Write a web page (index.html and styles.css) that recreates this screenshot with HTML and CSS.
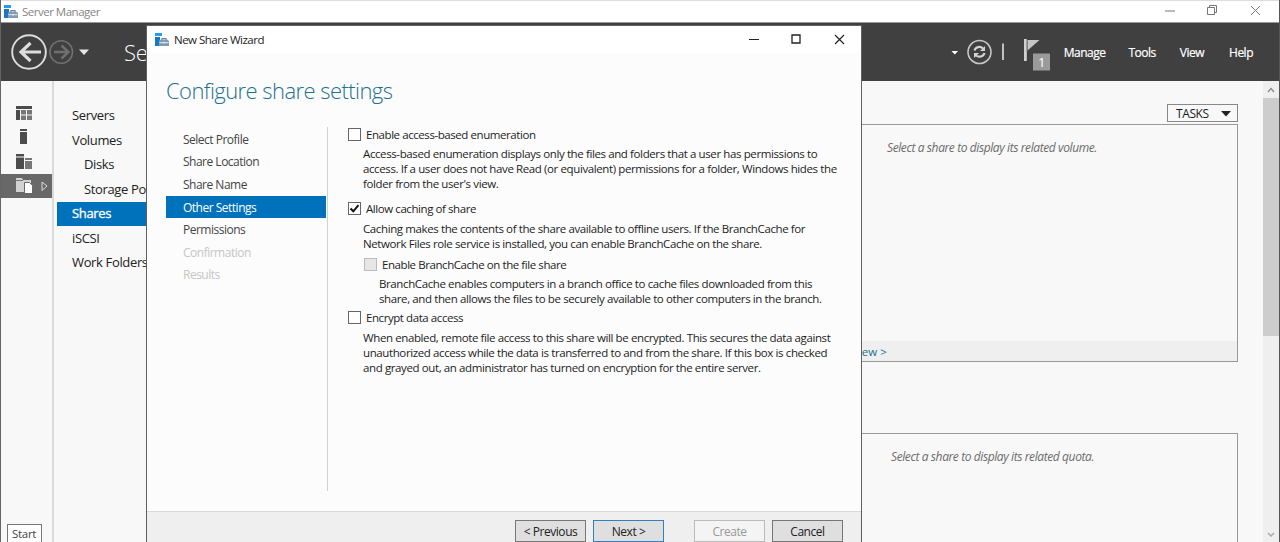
FILE: index.html
```html
<!DOCTYPE html>
<html lang="en">
<head>
<meta charset="utf-8">
<title>Server Manager</title>
<link rel="stylesheet" href="styles.css">
</head>
<body>
<svg width="0" height="0" class="defs">
  <symbol id="app" viewBox="0 0 14 14">
    <path d="M0 0h7v3H0z" fill="#2b9be8"/><path d="M0 4h5v9H0z" fill="#1878c8"/>
    <path d="M7 7V5.500h4V7" fill="none" stroke="#6c8496" stroke-width="1.200"/>
    <path d="M4 7.500l2-1h6l2 1.500v5H4z" fill="#7f9bb0"/><path d="M4.500 9.700h9M9 8.700v2" stroke="#e4edf3" stroke-width="1"/>
  </symbol>
</svg>
<div class="app">
  <div class="titlebar">
    <svg class="appicon"><use href="#app"/></svg><span class="apptitle">Server Manager</span>
    <svg class="winctl" width="120" height="22" viewBox="0 0 120 22" fill="none" stroke="#777">
      <path d="M5 10h10"/><path d="M47.500 6.500h7v7h-7zM49.500 6.500v-2h7v7h-2"/><path d="M91 5l9 9M100 5l-9 9"/>
    </svg>
  </div>
  <header class="banner">
    <svg class="navarrows" width="82" height="40" viewBox="0 0 82 40" fill="none">
      <circle cx="19" cy="20" r="16.800" stroke="#dcdcdc" stroke-width="1.900"/>
      <path d="M31 20H11M20.500 11l-9.500 9 9.500 9" stroke="#dcdcdc" stroke-width="3.200"/>
      <circle cx="51.200" cy="20" r="11.300" stroke="#707070" stroke-width="1.600"/>
      <path d="M44 20h14M51.500 13.500l7 6.500-7 6.500" stroke="#707070" stroke-width="2.400"/>
      <path d="M69 17.500h10l-5 5.500z" fill="#e6e6e6"/>
    </svg>
    <span class="crumb">Server Manager</span>
    <div class="tools">
      <svg width="104" height="40" viewBox="0 0 104 40" fill="none">
        <path d="M1.500 19h6.500l-3.200 3.500z" fill="#fff"/>
        <circle cx="29.500" cy="20" r="11.500" stroke="#c8c8c8" stroke-width="1.600"/>
        <path d="M24.500 18.500c1-4 6-4.500 8.500-2M34.500 21c-1 4-6 4.500-8.500 2.500" stroke="#d4d4d4" stroke-width="2.200"/>
        <path d="M35 14v5h-5zM24 26v-5h5z" fill="#d4d4d4"/>
        <path d="M53 11.500v16.500" stroke="#d0d0d0" stroke-width="1.800"/>
        <path d="M74 7h2.800v22H74z" fill="#d0d0d0"/><path d="M77.500 8h12l-12 10.500z" fill="#c6c6c6"/><path d="M77 9v10" stroke="#808080" stroke-width=".8"/>
        <path d="M83 21.500h17v17H83z" fill="#9a9a9a"/>
        <text x="91.500" y="34.500" text-anchor="middle" class="count">1</text>
      </svg>
      <span class="m1">Manage</span><span class="m2">Tools</span><span class="m3">View</span><span class="m4">Help</span>
    </div>
  </header>
  <main class="body">
    <div class="rail">
      <div class="ricon"><svg width="16" height="15" viewBox="0 0 16 15"><path d="M0 1h16v3H0zM0 5h4v10H0z" fill="#4c4c4c"/><path d="M5 5h5v4.500H5zM11 5h5v4.500h-5zM5 10.500h5V15H5zM11 10.500h5V15h-5z" fill="#777"/></svg></div>
      <div class="ricon"><svg width="16" height="15" viewBox="0 0 16 15"><path d="M4 0h7v2H4zM4 3h7v12H4z" fill="#4c4c4c"/></svg></div>
      <div class="ricon"><svg width="16" height="15" viewBox="0 0 16 15"><path d="M0 0h8v2.500H0zM0 3.500h8V15H0z" fill="#4c4c4c"/><path d="M9 4h7v2H9zM9 7h7v8H9z" fill="#777"/></svg></div>
      <div class="ricon sel"><svg width="34" height="15" viewBox="0 0 34 15"><path d="M0 0h6l1 2h8v3H9v9H0z" fill="#d2d2d2"/><path d="M0 2.500h7" stroke="#777"/><path d="M8.500 4.500h5l3 3v8h-8z" fill="#fff" stroke="#686868"/><path d="M26 4l5 4-5 4.500z" fill="none" stroke="#ddd"/></svg></div>
      <div class="start">Start</div>
    </div>
    <nav class="side">
      <div><span>Servers</span></div><div><span>Volumes</span></div><div class="sub"><span>Disks</span></div><div class="sub"><span>Storage Pools</span></div><div class="on"><span>Shares</span></div><div><span>iSCSI</span></div><div><span>Work Folders</span></div>
    </nav>
    <section class="content">
      <div class="tasks"><span>TASKS</span><svg width="10" height="6" viewBox="0 0 10 6"><path d="M0 0h10L5 5.500z" fill="#222"/></svg></div>
      <div class="panel volume"><em class="t1">Select a share to display its related volume.</em><div class="link"><span>view &gt;</span></div></div>
      <div class="panel quota"><em class="t2">Select a share to display its related quota.</em></div>
    </section>
    <div class="scroll">
      <svg width="16" height="17" viewBox="0 0 16 17"><path d="M5 11l3-3.500 3 3.500" fill="none" stroke="#888" stroke-width="1.200"/></svg>
      <div class="thumb"></div>
      <svg width="16" height="17" viewBox="0 0 16 17"><path d="M5 8l3 3 3-3" fill="none" stroke="#aaa" stroke-width="1.500"/></svg>
    </div>
  </main>
  <div class="dialog">
    <div class="dtitle">
      <svg class="appicon"><use href="#app"/></svg><span>New Share Wizard</span>
      <svg class="dctl" width="112" height="26" viewBox="0 0 112 26" fill="none" stroke="#222"><path d="M6 12.500h10"/><path d="M49 8h8v8h-8z" stroke-width="1.300"/><path d="M92 8l9 9M101 8l-9 9" stroke-width="1.200"/></svg>
    </div>
    <h1><span>Configure share settings</span></h1>
    <div class="wizard">
      <ol class="steps">
        <li><span>Select Profile</span></li><li><span>Share Location</span></li><li><span>Share Name</span></li><li class="on"><span>Other Settings</span></li><li><span>Permissions</span></li><li class="off"><span>Confirmation</span></li><li class="off"><span>Results</span></li>
      </ol>
      <div class="settings">
        <div class="opt"><i class="box"></i><span>Enable access-based enumeration</span></div>
        <p class="p1"><span>Access-based enumeration displays only the files and folders that a user has permissions to</span><span>access. If a user does not have Read (or equivalent) permissions for a folder, Windows hides the</span><span>folder from the user's view.</span></p>
        <div class="opt"><i class="box"><svg width="11" height="11" viewBox="0 0 11 11"><path d="M1.500 5.500L4.300 8.300 9.500 2.200" fill="none" stroke="#111" stroke-width="2"/></svg></i><span>Allow caching of share</span></div>
        <p class="p2"><span>Caching makes the contents of the share available to offline users. If the BranchCache for</span><span>Network Files role service is installed, you can enable BranchCache on the share.</span></p>
        <div class="opt nested"><i class="box dis"></i><span>Enable BranchCache on the file share</span></div>
        <p class="p3"><span>BranchCache enables computers in a branch office to cache files downloaded from this</span><span>share, and then allows the files to be securely available to other computers in the branch.</span></p>
        <div class="opt"><i class="box"></i><span>Encrypt data access</span></div>
        <p class="p4"><span>When enabled, remote file access to this share will be encrypted. This secures the data against</span><span>unauthorized access while the data is transferred to and from the share. If this box is checked</span><span>and grayed out, an administrator has turned on encryption for the entire server.</span></p>
      </div>
    </div>
    <div class="buttons"><button>&lt; Previous</button><button class="primary">Next &gt;</button><button class="create" disabled>Create</button><button>Cancel</button></div>
  </div>
</div>
</body>
</html>
```
FILE: styles.css
```css
* { box-sizing: border-box; }
body { margin: 0; font: 12px/15px "Open Sans", "Noto Sans", sans-serif; letter-spacing: -.4px; color: #1c1c1c; }
span, em { white-space: nowrap; }
.defs { position: absolute; }
.app { position: relative; width: 1280px; height: 542px; overflow: hidden; display: flex; flex-direction: column; border-left: 1px solid #666; border-right: 1px solid #555; background: #f8f8f8; }
.titlebar { height: 23px; flex: none; display: flex; align-items: center; background: #fff; border-top: 1px solid #ddd; padding-left: 3px; border-bottom: 1px solid #999; }
.appicon { width: 14px; height: 14px; flex: none; }
.apptitle { margin-left: 4px; color: #858585; font-size: 11.500px; letter-spacing: -.5px; }
.winctl { margin-left: auto; margin-right: -1px; }
.banner { height: 58px; flex: none; background: #404040; display: flex; align-items: center; color: #fff; padding-left: 9px; }
.banner .crumb { margin-left: 32px; font: 300 22px/30px "Open Sans", sans-serif; letter-spacing: -.3px; }
.tools { margin-left: auto; display: flex; align-items: center; margin-right: 26px; letter-spacing: -.5px; -webkit-text-stroke: .2px; }
.m1 { margin-left: 10px; } .m2 { margin-left: 23px; } .m3 { margin-left: 24px; } .m4 { margin-left: 25px; }
.count { font-size: 13px; fill: #fff; }
.body { flex: 1; display: flex; min-height: 0; }
.rail { width: 53px; border-right: 2px solid #dadada; padding-top: 19px; display: flex; flex-direction: column; }
.ricon { height: 24.500px; padding-left: 15px; display: flex; align-items: center; }
.ricon.sel { background: #686868; }
.start { margin-top: auto; margin-left: 6px; width: 35px; height: 18px; border: 1px solid #777; border-bottom: 0; background: #fff; padding: 1px 0 0 4px; font-size: 11.500px; letter-spacing: -.3px; color: #444; }
.side { width: 240px; padding: 22.500px 0 0 3px; font-size: 13px; letter-spacing: -.35px; color: #222; }
.side div { height: 24.500px; padding-left: 15px; display: flex; align-items: center; }
.side .sub { padding-left: 27px; }
.side .on { background: #0072bc; color: #fff; -webkit-text-stroke: .3px; }
.content { flex: 1; display: flex; flex-direction: column; padding: 23px 25px 0 0; }
.tasks { flex: none; align-self: flex-end; width: 71px; height: 18px; border: 1px solid #888; display: flex; align-items: center; padding: 1px 6px 0 8px; justify-content: space-between; }
.panel { flex: none; border: 1px solid #999; display: flex; flex-direction: column; }
.panel em { color: #6b6b6b; }
.volume { margin-top: 2px; height: 238px; }
.t1 { margin: 15px 0 0 592px; }
.link { margin-top: auto; height: 20px; background: #efefef; padding: 3px 0 0 592px; color: #19728a; display: flex; font-size: 11.500px; letter-spacing: .1px; }
.link span { width: 0; display: flex; justify-content: flex-end; }
.quota { margin-top: 71px; height: 130px; }
.t2 { margin: 15px 0 0 596px; }
.scroll { width: 16px; background: #efefef; display: flex; flex-direction: column; }
.thumb { height: 238px; background: #cdcdcd; margin-bottom: auto; }
.dialog { position: absolute; left: 145px; top: 25px; width: 716px; height: 517px; border: 1px solid #606060; border-bottom: 0; background: #fcfcfc; display: flex; flex-direction: column; }
.dtitle { height: 27px; display: flex; align-items: center; background: #fff; padding-left: 8px; }
.dtitle span { margin-left: 5px; font-size: 11.500px; letter-spacing: -.5px; }
.dctl { margin-left: auto; margin-right: 6px; }
h1 { margin: 22px 0 0 19px; font: 300 22px/30px "Open Sans", sans-serif; letter-spacing: -.56px; color: #1e718c; }
.wizard { margin: 22px 0 0 19px; height: 364px; display: flex; }
.steps { list-style: none; margin: 0; padding: 1px 0 0; width: 162px; border-right: 1px solid #d2d2d2; color: #444; letter-spacing: -.5px; }
.steps li { height: 22.600px; width: 160px; padding-left: 17px; display: flex; align-items: center; }
.steps .on { background: #0072bc; color: #fff; }
.steps .off { color: #c6c6c6; }
.settings { padding-left: 20px; flex: 1; font-size: 11.500px; }
.opt { display: flex; align-items: center; height: 14px; gap: 5px; letter-spacing: -.43px; }
.box { width: 13px; height: 13px; border: 1px solid #666; background: #fff; display: block; }
.box svg { display: block; }
.dis { border-color: #bbb; background: #e6e6e6; }
.nested { margin-left: 16px; }
.settings p { margin: 5px 0 10px 15px; letter-spacing: -.39px; }
.settings p span { display: block; width: max-content; }
.settings .p2 { margin: 6px 0 6px 15px; }
.settings .p3 { margin: 5px 0 4px 31px; }
.settings .p4 { margin-top: 6px; }
.buttons { margin-top: auto; height: 31px; border-top: 1px solid #d9d9d9; background: #efefef; display: flex; justify-content: flex-end; padding: 8px 18px 0; gap: 7px; }
button { width: 71px; height: 22px; padding: 0; border: 1px solid #777; background: #dfdfdf; color: #222; font: inherit; letter-spacing: -.45px; }
button.primary { border-color: #3080c4; }
button.create { margin-left: 23px; background: #f4f4f4; color: #999; border-color: #bbb; }
```
